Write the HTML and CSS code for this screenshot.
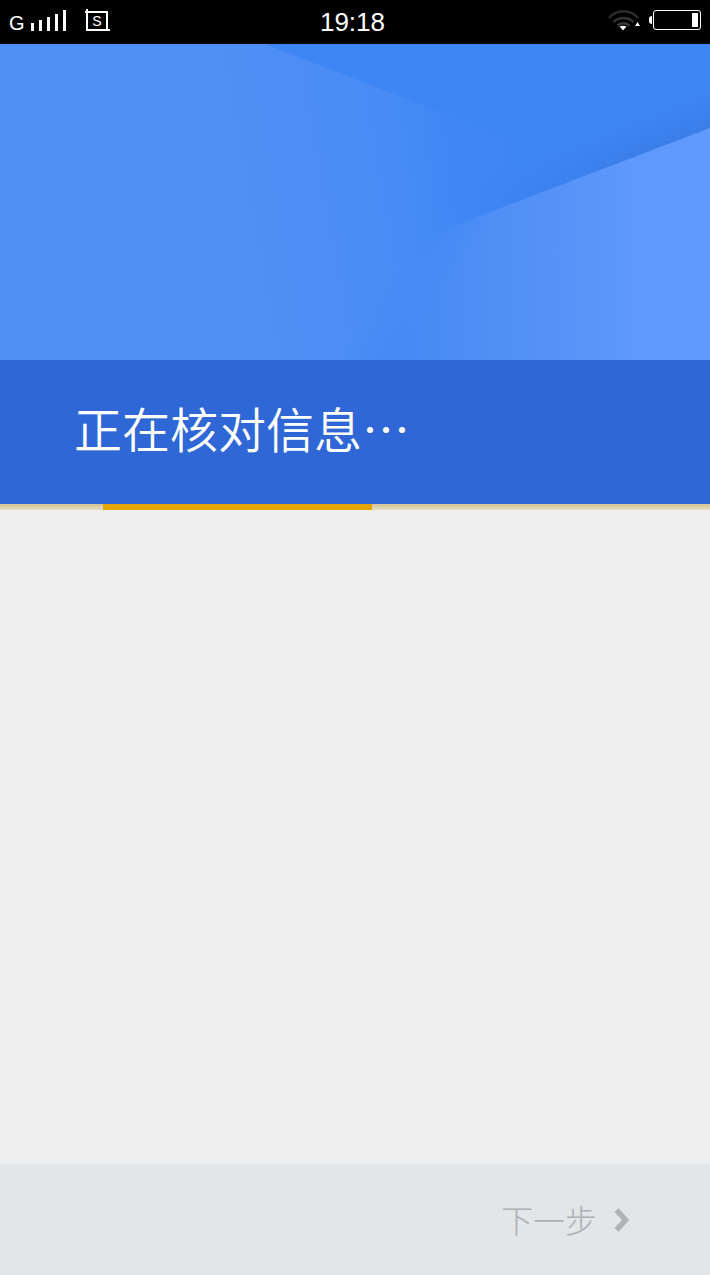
FILE: index.html
```html
<!DOCTYPE html>
<html lang="zh-CN">
<head>
    <meta charset="UTF-8">
    <meta name="viewport" content="width=device-width, initial-scale=1.0">
    <title>正在核对信息</title>
    <link rel="stylesheet" href="styles.css">
</head>
<body>
    <div class="screen">
        <div class="status-bar">
            <div class="status-left">
                <span class="net-type">G</span>
                <div class="signal">
                    <span class="bar bar-1"></span>
                    <span class="bar bar-2"></span>
                    <span class="bar bar-3"></span>
                    <span class="bar bar-4"></span>
                    <span class="bar bar-5"></span>
                </div>
                <svg class="shot-icon" width="25" height="22" viewBox="0 0 25 22">
                    <path d="M0 3H22V22M2 0V21H25" fill="none" stroke="#fff" stroke-width="2"/>
                    <text x="12" y="17" class="shot-letter">S</text>
                </svg>
            </div>
            <div class="status-time">19:18</div>
            <div class="status-right">
                <svg class="wifi-icon" width="32" height="23" viewBox="0 0 32 23">
                    <path d="M1 10C9 1 22 1 30 10" fill="none" stroke="#2c2c2c" stroke-width="2.500"/>
                    <path d="M5.500 14C11 8.500 20 8.500 25.500 14" fill="none" stroke="#333" stroke-width="2.500"/>
                    <path d="M9.500 17.500C13 14.500 18 14.500 21.500 17.500" fill="none" stroke="#3c3c3c" stroke-width="2.500"/>
                    <path d="M11.500 18.500Q15 17 18.500 18.500L15 22.500Z" fill="#fff"/>
                    <path d="M29.500 14L32 18H27Z" fill="#fff"/>
                </svg>
                <div class="battery">
                    <span class="battery-cap"></span>
                    <div class="battery-body">
                        <span class="battery-level"></span>
                    </div>
                </div>
            </div>
        </div>

        <div class="hero">
            <svg class="hero-art" width="710" height="318" viewBox="0 0 710 318">
                <defs>
                    <linearGradient id="baseFill" gradientUnits="userSpaceOnUse" x1="200" y1="200" x2="470" y2="150">
                        <stop offset="0" stop-color="#4f90f7"/>
                        <stop offset="0.3" stop-color="#4e8ff6"/>
                        <stop offset="0.7" stop-color="#498cf5"/>
                        <stop offset="1" stop-color="#4288f4"/>
                    </linearGradient>
                    <linearGradient id="darkFade" gradientUnits="userSpaceOnUse" x1="410" y1="0" x2="530" y2="0">
                        <stop offset="0" stop-color="#3f86f5" stop-opacity="0"/>
                        <stop offset="1" stop-color="#3f86f5"/>
                    </linearGradient>
                    <linearGradient id="shadeFill" gradientUnits="userSpaceOnUse" x1="587" y1="93" x2="600" y2="126">
                        <stop offset="0" stop-color="#3b7ee9" stop-opacity="0"/>
                        <stop offset="1" stop-color="#3b7ee9"/>
                    </linearGradient>
                    <linearGradient id="shadeMaskFill" gradientUnits="userSpaceOnUse" x1="470" y1="0" x2="620" y2="0">
                        <stop offset="0" stop-color="#000"/>
                        <stop offset="1" stop-color="#fff"/>
                    </linearGradient>
                    <mask id="shadeMask">
                        <rect width="710" height="318" fill="url(#shadeMaskFill)"/>
                    </mask>
                    <linearGradient id="lightFill" gradientUnits="userSpaceOnUse" x1="390" y1="0" x2="640" y2="0">
                        <stop offset="0" stop-color="#4589f3"/>
                        <stop offset="0.48" stop-color="#5190f6"/>
                        <stop offset="1" stop-color="#5f99fb"/>
                    </linearGradient>
                    <linearGradient id="lightMaskFill" gradientUnits="userSpaceOnUse" x1="380" y1="256" x2="420" y2="282">
                        <stop offset="0" stop-color="#000"/>
                        <stop offset="1" stop-color="#fff"/>
                    </linearGradient>
                    <mask id="lightMask">
                        <rect width="710" height="318" fill="url(#lightMaskFill)"/>
                    </mask>
                </defs>
                <rect width="710" height="318" fill="url(#baseFill)"/>
                <polygon points="265,0 710,0 710,173" fill="#3f86f5"/>
                <polygon points="410,50 710,50 710,84 410,199" fill="url(#darkFade)"/>
                <polygon points="440,80 710,30 710,84 440,187" fill="url(#shadeFill)" mask="url(#shadeMask)"/>
                <polygon points="420,195 710,84 710,318 340,318" fill="url(#lightFill)" mask="url(#lightMask)"/>
            </svg>
        </div>

        <div class="banner">
            <h1 class="banner-title">正在核对信息…</h1>
        </div>

        <div class="progress">
            <div class="progress-fill"></div>
        </div>

        <div class="content"></div>

        <div class="footer">
            <span class="next-label">下一步</span>
            <svg class="next-arrow" width="16" height="24" viewBox="0 0 16 24">
                <path d="M2.500 2L11.500 12L2.500 22" fill="none" stroke="#aeb3b6" stroke-width="5.500"/>
            </svg>
        </div>
    </div>
</body>
</html>
```

FILE: styles.css
```css
html, body {
    margin: 0;
    padding: 0;
}
body {
    font-family: "Liberation Sans", "Noto Sans CJK SC", sans-serif;
    background-color: #eeeeee;
}
.screen {
    width: 710px;
    height: 1275px;
    display: flex;
    flex-direction: column;
    overflow: hidden;
}
.status-bar {
    height: 44px;
    background: #000;
    color: #fff;
    display: grid;
    grid-template-columns: 1fr auto 1fr;
    align-items: center;
    flex-shrink: 0;
}
.status-left {
    display: flex;
    align-items: center;
    padding-left: 9px;
}
.net-type {
    font-size: 20px;
    line-height: 24px;
    margin-top: 1px;
    width: 22px;
}
.signal {
    display: flex;
    align-items: flex-end;
    gap: 5px;
    height: 21px;
    margin-top: -3px;
}
.bar {
    width: 3px;
    background: #fff;
}
.bar-1 { height: 8px; }
.bar-2 { height: 11px; }
.bar-3 { height: 14px; }
.bar-4 { height: 17px; }
.bar-5 { height: 21px; }
.shot-icon {
    margin-left: 19px;
    margin-top: -4px;
}
.shot-letter {
    font-family: "Liberation Sans", sans-serif;
    font-size: 14px;
    fill: #fff;
    text-anchor: middle;
}
.status-time {
    font-size: 26px;
    line-height: 44px;
    margin-right: 5px;
}
.status-right {
    display: flex;
    justify-content: flex-end;
    align-items: center;
    padding-right: 9px;
}
.wifi-icon {
    margin-right: 9px;
    margin-top: -6px;
}
.battery {
    display: flex;
    align-items: center;
    margin-top: -4px;
}
.battery-cap {
    width: 3px;
    height: 8px;
    background: #fff;
    border-radius: 3px 0 0 3px;
}
.battery-body {
    width: 42px;
    height: 14px;
    margin-left: 1px;
    padding: 2px;
    border: 1px solid #fff;
    border-radius: 3px;
    display: flex;
    justify-content: flex-end;
}
.battery-level {
    width: 6px;
    background: #fff;
}
.hero {
    height: 316px;
    flex-shrink: 0;
}
.hero-art {
    display: block;
}
.banner {
    height: 144px;
    background: #2f68d6;
    flex-shrink: 0;
    display: flex;
    align-items: center;
    padding-left: 74px;
}
.banner-title {
    margin: 0;
    color: #fff;
    font-family: "Noto Sans CJK SC", sans-serif;
    font-size: 48px;
    font-weight: 350;
    line-height: 60px;
    margin-top: -11px;
}
.progress {
    height: 6px;
    background: linear-gradient(#d8c490, #e3dcc8);
    padding-left: 103px;
    flex-shrink: 0;
}
.progress-fill {
    width: 269px;
    height: 6px;
    background: #e3a400;
}
.content {
    flex: 1;
    background: #eeeeee;
}
.footer {
    height: 111px;
    background: #e2e6e9;
    display: flex;
    align-items: center;
    justify-content: flex-end;
    padding-right: 80px;
    flex-shrink: 0;
}
.next-label {
    font-family: "Noto Sans CJK SC", sans-serif;
    font-weight: 300;
    font-size: 32px;
    line-height: 40px;
    color: #adb1b4;
    margin-right: 17px;
    margin-top: -2px;
}
```
